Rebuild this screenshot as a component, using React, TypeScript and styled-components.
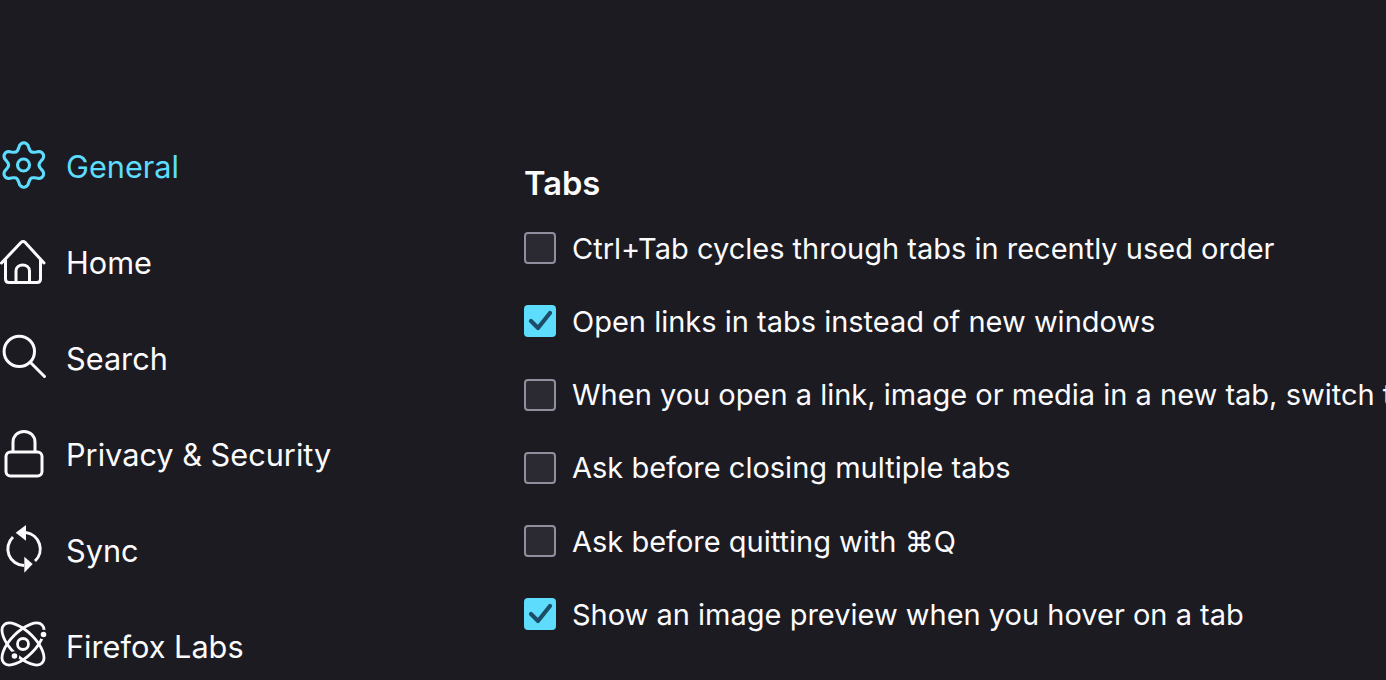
import React from 'react';
import styled, { createGlobalStyle } from 'styled-components';

const GlobalStyle = createGlobalStyle`
  html, body {
    margin: 0;
    padding: 0;
    width: 100%;
    height: 100%;
    overflow: hidden;
    background: #1c1b22;
  }
`;

// six soft lobes round the centre, same outline as the browser's gear
const gearOutline = () => {
  const points: string[] = [];
  for (let deg = 0; deg < 360; deg += 4) {
    const rad = (deg * Math.PI) / 180;
    const wave = Math.cos(6 * rad);
    const r = 18.7 + 3.5 * Math.sign(wave) * Math.pow(Math.abs(wave), 0.75);
    points.push(`${(23.8 + r * Math.sin(rad)).toFixed(2)} ${(23 - r * Math.cos(rad)).toFixed(2)}`);
  }
  return `M${points.join('L')}Z`;
};

const GearIcon = () => (
  <svg viewBox="0 0 48 48" fill="none" stroke="currentColor" strokeWidth="3.1" strokeLinejoin="round">
    <circle cx="23.5" cy="23" r="6" />
    <path d={gearOutline()} />
  </svg>
);

const HomeIcon = () => (
  <svg viewBox="0 0 48 48" fill="none" stroke="currentColor" strokeWidth="3" strokeLinejoin="round" strokeLinecap="round">
    <path d="M1.5 25 21.200 4.300c1.100-1.100 2.700-1.100 3.800 0L44 25" />
    <path d="M5.500 22v19c0 2 1.300 3.500 3.500 3.500h28c2.200 0 3.500-1.500 3.500-3.500V22" />
    <path d="M16 44.500V33c0-3.600 3-6 6.700-6s6.800 2.400 6.800 6v11.500" />
  </svg>
);

const SearchIcon = () => (
  <svg viewBox="0 0 48 48" fill="none" stroke="currentColor" strokeWidth="3" strokeLinecap="round">
    <circle cx="19.300" cy="17.400" r="15.200" />
    <path d="M31 29 44.500 42.500" />
  </svg>
);

const LockIcon = () => (
  <svg viewBox="0 0 48 48" fill="none" stroke="currentColor" strokeWidth="3" strokeLinejoin="round">
    <rect x="6" y="22" width="36" height="24" rx="4.500" />
    <path d="M13 22v-9.500C13 6 17.500 1.500 24 1.500S35 6 35 12.500V22" />
  </svg>
);

const SyncIcon = () => (
  <svg viewBox="0 0 48 48" fill="none" stroke="currentColor" strokeWidth="3">
    <path d="M13 11A16.500 16.500 0 0 0 24 39.500" />
    <path d="M26 6.600A16.500 16.500 0 0 1 35 35" />
    <path d="M26 -1 15.700 6.700 26 14.700z" fill="currentColor" stroke="none" />
    <path d="M24.300 30.700 32.700 38 24.300 46.700z" fill="currentColor" stroke="none" />
  </svg>
);

const LabsIcon = () => (
  <svg viewBox="0 0 48 48" fill="none" stroke="currentColor" strokeWidth="2.800">
    <circle cx="23" cy="22" r="5.500" />
    <ellipse cx="23" cy="22" rx="27" ry="12.300" transform="rotate(45 23 22)" />
    <ellipse cx="23" cy="22" rx="27" ry="12.300" transform="rotate(-45 23 22)" />
    <circle cx="43.500" cy="12.500" r="3.800" fill="currentColor" stroke="#1c1b22" strokeWidth="2" />
    <circle cx="14.500" cy="34" r="3.800" fill="currentColor" stroke="#1c1b22" strokeWidth="2" />
  </svg>
);

const CheckIcon = () => (
  <svg viewBox="0 0 32 32" fill="none" stroke="#1c4c66" strokeWidth="4.200" strokeLinecap="round" strokeLinejoin="round">
    <path d="M7 16l7 7L26 8" />
  </svg>
);

const navItems = [
  { label: 'General', icon: <GearIcon />, active: true },
  { label: 'Home', icon: <HomeIcon /> },
  { label: 'Search', icon: <SearchIcon /> },
  { label: 'Privacy & Security', icon: <LockIcon /> },
  { label: 'Sync', icon: <SyncIcon /> },
  { label: 'Firefox Labs', icon: <LabsIcon /> },
];

const tabOptions = [
  { label: 'Ctrl+Tab cycles through tabs in recently used order', checked: false },
  { label: 'Open links in tabs instead of new windows', checked: true },
  { label: 'When you open a link, image or media in a new tab, switch to it immediately', checked: false },
  { label: 'Ask before closing multiple tabs', checked: false },
  { label: 'Ask before quitting with ⌘Q', checked: false },
  { label: 'Show an image preview when you hover on a tab', checked: true },
];

const App = () => (
  <>
    <GlobalStyle />
    <Page>
      <Sidebar>
        {navItems.map((item) => (
          <NavItem key={item.label} $active={item.active}>
            <NavIcon>{item.icon}</NavIcon>
            <span>{item.label}</span>
          </NavItem>
        ))}
      </Sidebar>
      <Main>
        <Heading>Tabs</Heading>
        <OptionList>
          {tabOptions.map((option) => (
            <Option key={option.label}>
              <Box $checked={option.checked}>{option.checked && <CheckIcon />}</Box>
              <span>{option.label}</span>
            </Option>
          ))}
        </OptionList>
      </Main>
    </Page>
  </>
);

export default App;

const Page = styled.div`
  width: 1386px;
  height: 680px;
  overflow: hidden;
  display: flex;
  background: #1c1b22;
  color: #fbfbfe;
  font-family: Inter, "Liberation Sans", sans-serif;
`;

const Sidebar = styled.nav`
  width: 524px;
  flex-shrink: 0;
  padding-top: 142px;
  box-sizing: border-box;
  display: flex;
  flex-direction: column;
  gap: 48px;
`;

const NavItem = styled.div<{ $active?: boolean }>`
  height: 48px;
  display: flex;
  align-items: center;
  gap: 18px;
  font-size: 30.700px;
  white-space: nowrap;
  color: ${(props) => (props.$active ? '#5ddcfd' : '#fbfbfe')};
`;

const NavIcon = styled.span`
  width: 48px;
  height: 48px;
  flex-shrink: 0;
  display: block;

  svg {
    display: block;
    width: 48px;
    height: 48px;
    overflow: visible;
  }
`;

const Main = styled.main`
  flex: 1;
  min-width: 0;
  padding-top: 162px;
`;

const Heading = styled.h2`
  margin: 0 0 28px;
  font-size: 32.700px;
  line-height: 42px;
  font-weight: 600;
`;

const OptionList = styled.div`
  display: flex;
  flex-direction: column;
  gap: 41.250px;
`;

const Option = styled.div`
  height: 32px;
  display: flex;
  align-items: center;
  gap: 16px;
  font-size: 29px;
  white-space: nowrap;
`;

const Box = styled.span<{ $checked?: boolean }>`
  width: 32px;
  height: 32px;
  flex-shrink: 0;
  box-sizing: border-box;
  border-radius: 4px;
  background: ${(props) => (props.$checked ? '#5ddcfd' : '#2b2a33')};
  border: ${(props) => (props.$checked ? 'none' : '2px solid #8f8f9d')};

  svg {
    display: block;
    width: 32px;
    height: 32px;
  }
`;
